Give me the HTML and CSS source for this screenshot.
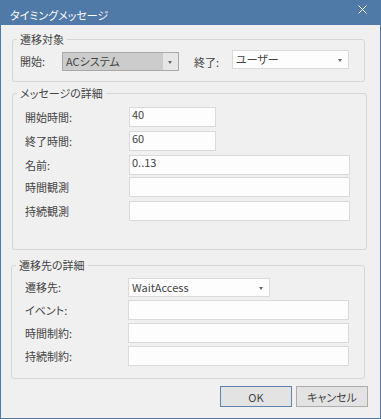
FILE: index.html
```html
<!DOCTYPE html>
<html lang="ja">
<head>
  <meta charset="UTF-8">
  <title>タイミングメッセージ</title>
  <link rel="stylesheet" href="styles.css">
</head>
<body>
  <div class="window">
    <div class="titlebar">
      <span class="title">タイミングメッセージ</span>
      <svg class="close" width="9" height="9" viewBox="0 0 9 9">
        <path d="M0.5 0.5 L8.5 8.5 M8.5 0.5 L0.5 8.5" stroke="#fff" stroke-width="1" fill="none"/>
      </svg>
    </div>

    <div class="content">
      <fieldset class="group group-target">
        <legend>遷移対象</legend>
        <div class="target-row">
          <span class="label label-start">開始:</span>
          <div class="combo combo-disabled combo-start">
            <span class="combo-text">ACシステム</span>
            <span class="combo-arrow"></span>
          </div>
          <span class="label label-end">終了:</span>
          <div class="combo combo-end">
            <span class="combo-text">ユーザー</span>
            <span class="combo-arrow"></span>
          </div>
        </div>
      </fieldset>

      <fieldset class="group group-message">
        <legend>メッセージの詳細</legend>
        <div class="rows">
          <div class="row">
            <span class="label">開始時間:</span>
            <div class="field field-short">40</div>
          </div>
          <div class="row">
            <span class="label">終了時間:</span>
            <div class="field field-short">60</div>
          </div>
          <div class="row">
            <span class="label">名前:</span>
            <div class="field field-long">0..13</div>
          </div>
          <div class="row row-tight">
            <span class="label">時間観測</span>
            <div class="field field-long"></div>
          </div>
          <div class="row">
            <span class="label">持続観測</span>
            <div class="field field-long"></div>
          </div>
        </div>
      </fieldset>

      <fieldset class="group group-dest">
        <legend>遷移先の詳細</legend>
        <div class="rows rows-dest">
          <div class="row">
            <span class="label">遷移先:</span>
            <div class="combo combo-dest">
              <span class="combo-text">WaitAccess</span>
              <span class="combo-arrow"></span>
            </div>
          </div>
          <div class="row">
            <span class="label">イベント:</span>
            <div class="field field-long"></div>
          </div>
          <div class="row">
            <span class="label">時間制約:</span>
            <div class="field field-long"></div>
          </div>
          <div class="row">
            <span class="label">持続制約:</span>
            <div class="field field-long"></div>
          </div>
        </div>
      </fieldset>

      <div class="buttons">
        <button class="btn btn-default">OK</button>
        <button class="btn">キャンセル</button>
      </div>
    </div>
  </div>
</body>
</html>
```

FILE: styles.css
```css
* {
  box-sizing: border-box;
}

body {
  margin: 0;
  font-family: "Noto Sans CJK JP", "Noto Sans", sans-serif;
  font-size: 11px;
  font-feature-settings: "palt";
  color: #444;
  background: #f0f0f0;
}

.window {
  width: 381px;
  height: 419px;
  background: #f0f0f0;
  border: 1px solid #4f79a6;
  border-top: none;
}

.titlebar {
  height: 25px;
  margin: 0 -1px;
  padding: 0 14px 0 10px;
  background: #4f79a6;
  display: flex;
  justify-content: space-between;
  align-items: flex-start;
}

.title {
  color: #fff;
  font-size: 11px;
  line-height: 14px;
  margin-top: 8px;
}

.close {
  margin-top: 5px;
}

.group {
  margin: 0;
  padding: 0;
  border: 1px solid #d6d6d6;
  border-radius: 3px;
  min-inline-size: 0;
}

.group legend {
  margin-left: 4px;
  padding: 0 3px;
  line-height: 14px;
}

.group-target {
  margin: 7px 15px 0 11px;
}

.group-message {
  margin: 4px 13px 0 11px;
}

.group-dest {
  margin: 8px 15px 0 10px;
}

.target-row {
  display: flex;
  align-items: flex-start;
  padding: 4px 0 9px 7px;
}

.label {
  line-height: 19px;
  white-space: nowrap;
}

.label-start {
  width: 42px;
  margin-top: 2px;
}

.label-end {
  width: 38px;
  margin: 3px 0 0 15px;
}

.combo {
  height: 19px;
  display: flex;
  align-items: center;
  background: #fdfdfd;
  border: 1px solid #dadada;
}

.combo-text {
  flex: 1;
  padding-left: 3px;
  line-height: 17px;
  white-space: nowrap;
}

.combo-arrow {
  width: 15px;
  height: 17px;
  position: relative;
}

.combo-arrow::after {
  content: "";
  position: absolute;
  left: 5px;
  top: 8px;
  border-left: 2.5px solid transparent;
  border-right: 2.5px solid transparent;
  border-top: 3px solid #666;
}

.combo-start {
  width: 117px;
  margin-top: 2px;
}

.combo-end {
  width: 117px;
}

.combo-disabled {
  background: #cccccc;
  border-color: #a9a9a9;
}

.combo-disabled .combo-arrow {
  background: #e6e6e6;
}

.combo-dest {
  width: 142px;
}

.rows {
  display: flex;
  flex-direction: column;
  gap: 4px;
  padding: 7px 0 28px 12px;
}

.rows-dest {
  gap: 3px;
  padding: 6px 0 12px 13px;
}

.row {
  display: flex;
  align-items: center;
}

.row-tight {
  margin-top: -2px;
}

.rows .label {
  width: 104px;
}

.rows-dest .label {
  width: 103px;
}

.field {
  height: 20px;
  padding: 0 2px;
  line-height: 13px;
  background: #fdfdfd;
  border: 1px solid #dadada;
}

.field-short {
  width: 87px;
}

.field-long {
  width: 221px;
}

.buttons {
  display: flex;
  justify-content: flex-end;
  gap: 4px;
  margin-top: 7px;
  padding-right: 12px;
}

.btn {
  width: 72px;
  height: 21px;
  padding: 0;
  font-family: inherit;
  font-size: 11px;
  font-feature-settings: "palt";
  color: #444;
  background: #e3e3e3;
  border: 1px solid #adadad;
  border-radius: 0;
}

.btn-default {
  border-color: #5f82ab;
}
```
